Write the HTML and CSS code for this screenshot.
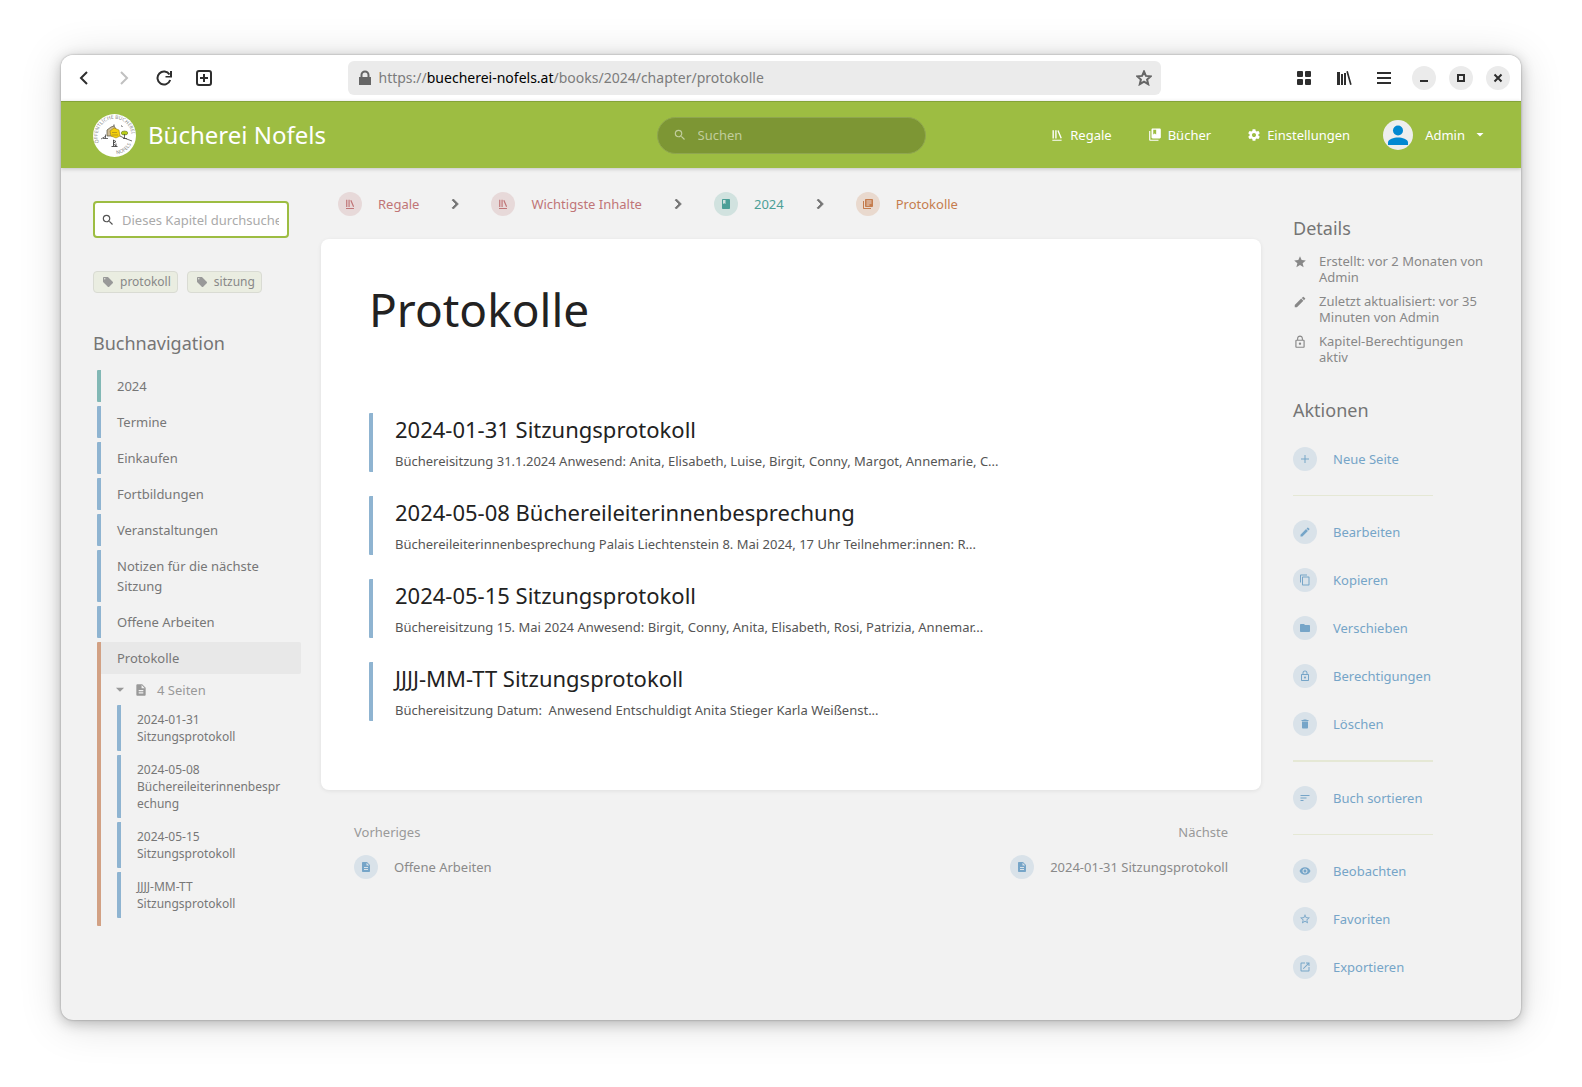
FILE: index.html
```html
<!DOCTYPE html>
<html lang="de">
<head>
<meta charset="utf-8">
<meta name="viewport" content="width=device-width, initial-scale=1">
<title>Protokolle | Bücherei Nofels</title>
<link rel="stylesheet" href="styles.css">
</head>
<body>
<svg class="sprite" aria-hidden="true">
  <symbol id="i-shelf" viewBox="0 0 24 24"><path d="M4 20.058h15.892V22H4z"/><path d="M6.658 3.643V18h-2.38V3.643zM11.326 3.643V18H8.947V3.643zM14.722 3.856l5.613 13.214-2.19.93-5.613-13.214z"/></symbol>
  <symbol id="i-books" viewBox="0 0 24 24"><path d="M20 1H8c-1.100 0-2 .9-2 2v13c0 1.100.9 2 2 2h12c1.100 0 2-.9 2-2V3c0-1.100-.9-2-2-2zM9 3h5v8l-2.500-1.500L9 11z"/><path d="M4 5H2v15c0 1.100.9 2 2 2h14v-2H4z"/></symbol>
  <symbol id="i-book" viewBox="0 0 24 24"><path d="M18 2H6c-1.100 0-2 .9-2 2v16c0 1.100.9 2 2 2h12c1.100 0 2-.9 2-2V4c0-1.100-.9-2-2-2zM6 4h5v8l-2.500-1.500L6 12V4z"/></symbol>
  <symbol id="i-chapter" viewBox="0 0 24 24"><path d="M4 6H2v14c0 1.100.9 2 2 2h14v-2H4V6zm16-4H8c-1.100 0-2 .9-2 2v12c0 1.100.9 2 2 2h12c1.100 0 2-.9 2-2V4c0-1.100-.9-2-2-2zm-1 9H9V9h10v2zm-4 4H9v-2h6v2zm4-8H9V5h10v2z"/></symbol>
  <symbol id="i-page" viewBox="0 0 24 24"><path d="M14 2H6c-1.100 0-2 .9-2 2v16c0 1.100.9 2 2 2h12c1.100 0 2-.9 2-2V8l-6-6zm2 16H8v-2h8v2zm0-4H8v-2h8v2zm-3-5V3.500L18.500 9H13z"/></symbol>
  <symbol id="i-search" viewBox="0 0 24 24"><path d="M15.500 14h-.79l-.28-.27A6.471 6.471 0 0 0 16 9.500 6.500 6.500 0 1 0 9.500 16c1.610 0 3.090-.59 4.230-1.570l.27.28v.79l5 4.990L20.490 19l-4.990-5zm-6 0C7.010 14 5 11.990 5 9.500S7.010 5 9.500 5 14 7.010 14 9.500 11.990 14 9.500 14z"/></symbol>
  <symbol id="i-gear" viewBox="0 0 24 24"><path d="M19.430 12.980c.04-.32.07-.64.07-.98s-.03-.66-.07-.98l2.110-1.650c.19-.15.24-.42.12-.64l-2-3.460c-.12-.22-.39-.3-.61-.22l-2.490 1c-.52-.4-1.080-.73-1.690-.98l-.38-2.650A.488.488 0 0 0 14 2h-4c-.25 0-.46.18-.49.42l-.38 2.650c-.61.25-1.170.59-1.690.98l-2.490-1c-.23-.09-.49 0-.61.22l-2 3.460c-.13.22-.07.49.12.64l2.110 1.650c-.04.32-.07.65-.07.98s.03.66.07.98l-2.110 1.650c-.19.15-.24.42-.12.64l2 3.460c.12.22.39.3.61.22l2.490-1c.52.4 1.080.73 1.690.98l.38 2.650c.03.24.24.42.49.42h4c.25 0 .46-.18.49-.42l.38-2.650c.61-.25 1.170-.59 1.690-.98l2.490 1c.23.09.49 0 .61-.22l2-3.460c.12-.22.07-.49-.12-.64l-2.110-1.650zM12 15.500c-1.930 0-3.500-1.570-3.500-3.500s1.570-3.500 3.500-3.500 3.500 1.570 3.500 3.500-1.570 3.500-3.500 3.500z"/></symbol>
  <symbol id="i-caret" viewBox="0 0 24 24"><path d="M5 8l7 7 7-7z"/></symbol>
  <symbol id="i-chevron" viewBox="0 0 24 24"><path d="M10 6L8.590 7.410 13.170 12l-4.580 4.590L10 18l6-6z"/></symbol>
  <symbol id="i-tag" viewBox="0 0 24 24"><path d="M21.410 11.580l-9-9C12.050 2.220 11.550 2 11 2H4c-1.100 0-2 .9-2 2v7c0 .55.22 1.050.59 1.420l9 9c.36.36.86.58 1.410.58s1.050-.22 1.410-.59l7-7c.37-.36.59-.86.59-1.410s-.23-1.060-.59-1.420zM5.500 7C4.670 7 4 6.330 4 5.500S4.670 4 5.500 4 7 4.670 7 5.500 6.330 7 5.500 7z"/></symbol>
  <symbol id="i-star" viewBox="0 0 24 24"><path d="M12 17.270L18.180 21l-1.640-7.030L22 9.240l-7.190-.61L12 2 9.190 8.630 2 9.240l5.460 4.730L5.820 21z"/></symbol>
  <symbol id="i-star-outline" viewBox="0 0 24 24"><path d="M22 9.240l-7.190-.62L12 2 9.190 8.630 2 9.240l5.460 4.730L5.820 21 12 17.270 18.180 21l-1.630-7.030L22 9.240zM12 15.400l-3.760 2.270 1-4.280-3.320-2.880 4.380-.38L12 6.100l1.710 4.040 4.380.38-3.320 2.880 1 4.280L12 15.400z"/></symbol>
  <symbol id="i-edit" viewBox="0 0 24 24"><path d="M3 17.250V21h3.750L17.810 9.940l-3.750-3.750L3 17.250zM20.710 7.040a.996.996 0 0 0 0-1.410l-2.340-2.340a.996.996 0 0 0-1.410 0l-1.830 1.830 3.750 3.750 1.830-1.830z"/></symbol>
  <symbol id="i-lock" viewBox="0 0 24 24"><path d="M12 17c1.100 0 2-.9 2-2s-.9-2-2-2-2 .9-2 2 .9 2 2 2zm6-9h-1V6c0-2.760-2.240-5-5-5S7 3.240 7 6v2H6c-1.100 0-2 .9-2 2v10c0 1.100.9 2 2 2h12c1.100 0 2-.9 2-2V10c0-1.100-.9-2-2-2zM8.900 6c0-1.710 1.390-3.100 3.100-3.100s3.100 1.390 3.100 3.100v2H8.900V6zM18 20H6V10h12v10z"/></symbol>
  <symbol id="i-add" viewBox="0 0 24 24"><path d="M20 13h-7v7h-2v-7H4v-2h7V4h2v7h7z"/></symbol>
  <symbol id="i-copy" viewBox="0 0 24 24"><path d="M16 1H4c-1.100 0-2 .9-2 2v14h2V3h12V1zm3 4H8c-1.100 0-2 .9-2 2v14c0 1.100.9 2 2 2h11c1.100 0 2-.9 2-2V7c0-1.100-.9-2-2-2zm0 16H8V7h11v14z"/></symbol>
  <symbol id="i-folder" viewBox="0 0 24 24"><path d="M10 4H4c-1.100 0-1.990.9-1.990 2L2 18c0 1.100.9 2 2 2h16c1.100 0 2-.9 2-2V8c0-1.100-.9-2-2-2h-8l-2-2z"/></symbol>
  <symbol id="i-delete" viewBox="0 0 24 24"><path d="M6 19c0 1.100.9 2 2 2h8c1.100 0 2-.9 2-2V7H6v12zM19 4h-3.500l-1-1h-5l-1 1H5v2h14V4z"/></symbol>
  <symbol id="i-sort" viewBox="0 0 24 24"><path d="M3 18h6v-2H3v2zM3 6v2h18V6H3zm0 7h12v-2H3v2z"/></symbol>
  <symbol id="i-eye" viewBox="0 0 24 24"><path d="M12 4.500C7 4.500 2.730 7.610 1 12c1.730 4.390 6 7.500 11 7.500s9.270-3.110 11-7.500c-1.730-4.390-6-7.500-11-7.500zM12 17c-2.760 0-5-2.240-5-5s2.240-5 5-5 5 2.240 5 5-2.240 5-5 5zm0-8c-1.660 0-3 1.340-3 3s1.340 3 3 3 3-1.340 3-3-1.340-3-3-3z"/></symbol>
  <symbol id="i-export" viewBox="0 0 24 24"><path d="M19 19H5V5h7V3H5a2 2 0 0 0-2 2v14a2 2 0 0 0 2 2h14c1.100 0 2-.9 2-2v-7h-2v7zM14 3v2h3.590l-9.830 9.830 1.410 1.410L19 6.410V10h2V3h-7z"/></symbol>
</svg>

<div class="window">
  <div class="toolbar">
    <div class="tools">
      <button class="tool" aria-label="Zurück"><svg viewBox="0 0 16 16"><path d="M11 2L5 8l6 6" class="line"/></svg></button>
      <button class="tool tool-off" aria-label="Vor"><svg viewBox="0 0 16 16"><path d="M5 2l6 6-6 6" class="line"/></svg></button>
      <button class="tool" aria-label="Neu laden"><svg viewBox="0 0 16 16"><path d="M13.500 4.500A6.500 6.500 0 1 0 14.200 10" class="line"/><path d="M16 1v6.500H9.500V6H14V1z"/></svg></button>
      <button class="tool" aria-label="Neuer Tab"><svg viewBox="0 0 16 16"><rect x="1" y="1" width="14" height="14" rx="2" class="line"/><path d="M8 4v8M4 8h8" class="line"/></svg></button>
    </div>
    <div class="address">
      <svg class="address-icon" viewBox="0 0 16 16"><path d="M2 7h1.500V5a4.500 4.500 0 0 1 9 0v2H14v8H2zM5.500 7h5V5a2.500 2.500 0 0 0-5 0z"/></svg>
      <span class="url">https://<b>buecherei-nofels.at</b>/books/2024/chapter/protokolle</span>
      <button class="tool tool-star" aria-label="Lesezeichen"><svg viewBox="0 0 16 16"><path d="M8 1.500l1.900 4.400 4.800.4-3.600 3.200 1.100 4.700L8 11.700l-4.200 2.500 1.100-4.700L1.300 6.300l4.800-.4z" class="line"/></svg></button>
    </div>
    <div class="tools">
      <button class="tool" aria-label="Übersicht"><svg viewBox="0 0 16 16"><rect x="1" y="1" width="6" height="6" rx="1"/><rect x="9" y="1" width="6" height="6" rx="1"/><rect x="1" y="9" width="6" height="6" rx="1"/><rect x="9" y="9" width="6" height="6" rx="1"/></svg></button>
      <button class="tool" aria-label="Bibliothek"><svg viewBox="0 0 16 16"><path d="M1 2h3v13H1zM5 4h2v11H5zM8 3h2v12H8zM10.300 1.500l1.600-.4 3.800 13.400-1.600.4z"/></svg></button>
      <button class="tool" aria-label="Menü"><svg viewBox="0 0 16 16"><path d="M1 2h14v2H1zM1 7h14v2H1zM1 12h14v2H1z"/></svg></button>
      <div class="window-buttons">
        <button class="round" aria-label="Minimieren"><svg viewBox="0 0 16 16"><path d="M4 10h8v2H4z"/></svg></button>
        <button class="round" aria-label="Maximieren"><svg viewBox="0 0 16 16"><path d="M5 5h6v6H5z" class="line"/></svg></button>
        <button class="round" aria-label="Schließen"><svg viewBox="0 0 16 16"><path d="M4.500 4.500l7 7M11.500 4.500l-7 7" class="line"/></svg></button>
      </div>
    </div>
  </div>

  <header class="header">
    <a class="brand" href="#">
      <svg class="logo" viewBox="0 0 43 43" aria-hidden="true">
        <defs>
          <path id="ring-top" d="M6 28.500A17 17 0 1 1 38.300 25"/>
          <path id="ring-low" d="M23.500 40.200A18.800 18.800 0 0 0 39.500 27"/>
        </defs>
        <circle cx="21.500" cy="21.500" r="21.500" fill="#fff"/>
        <text class="ring"><textPath href="#ring-top">ÖFFENTLICHE BÜCHEREI</textPath></text>
        <text class="ring"><textPath href="#ring-low">NOFELS</textPath></text>
        <path d="M14 22v-6l4-3 3-1 2 3v7z" fill="#cdbb94" stroke="#55503f" stroke-width=".7"/>
        <path d="M17 17l4-3 5 2 1 6-4 2-5-2z" fill="#f5cf0b" stroke="#8a7410" stroke-width=".5"/>
        <path d="M19 18.500h5M19 21h6" stroke="#927c25" stroke-width=".6"/>
        <ellipse cx="31.500" cy="19" rx="3.300" ry="2" fill="#b8cd19" stroke="#68772a" stroke-width=".6"/>
        <path d="M31.500 20v5M12.500 20.500v4M8 25l5-3M10 24.500h5M27 22l4 2 8 3M30 24.500h4" fill="none" stroke="#494949" stroke-width=".8"/>
        <path d="M20 26l3 1.500-3 2 3 2.500M20.500 26v6M18.500 32.500h6M23 29.500v3M28.500 11.500l.8 1.500M21 12v-1.500" fill="none" stroke="#444" stroke-width=".9"/>
      </svg>
      <span>Bücherei Nofels</span>
    </a>
    <label class="search">
      <svg class="icon"><use href="#i-search"/></svg>
      <input type="text" placeholder="Suchen" aria-label="Suchen">
    </label>
    <nav class="menu">
      <a href="#"><svg class="icon"><use href="#i-shelf"/></svg>Regale</a>
      <a href="#"><svg class="icon"><use href="#i-books"/></svg>Bücher</a>
      <a href="#"><svg class="icon"><use href="#i-gear"/></svg>Einstellungen</a>
      <button class="user">
        <svg class="avatar" viewBox="0 0 30 30"><circle cx="15" cy="15" r="15" fill="#eee"/><circle cx="15" cy="10.500" r="5" fill="#0288d1"/><path d="M5 25v-2.500c0-3.500 6-5 10-5s10 1.500 10 5V25z" fill="#0288d1"/></svg>
        <span>Admin</span>
        <svg class="icon"><use href="#i-caret"/></svg>
      </button>
    </nav>
  </header>

  <div class="layout">
    <aside class="left">
      <label class="chapter-search">
        <svg class="icon"><use href="#i-search"/></svg>
        <input type="text" placeholder="Dieses Kapitel durchsuchen" aria-label="Dieses Kapitel durchsuchen">
      </label>
      <div class="tags">
        <a class="tag" href="#"><svg class="icon"><use href="#i-tag"/></svg>protokoll</a>
        <a class="tag" href="#"><svg class="icon"><use href="#i-tag"/></svg>sitzung</a>
      </div>
      <h2>Buchnavigation</h2>
      <ul class="nav">
        <li><a class="entry book" href="#">2024</a></li>
        <li><a class="entry" href="#">Termine</a></li>
        <li><a class="entry" href="#">Einkaufen</a></li>
        <li><a class="entry" href="#">Fortbildungen</a></li>
        <li><a class="entry" href="#">Veranstaltungen</a></li>
        <li><a class="entry" href="#">Notizen für die nächste Sitzung</a></li>
        <li><a class="entry" href="#">Offene Arbeiten</a></li>
        <li class="chapter">
          <a class="entry current" href="#">Protokolle</a>
          <button class="toggle"><svg class="icon"><use href="#i-caret"/></svg><svg class="icon"><use href="#i-page"/></svg>4 Seiten</button>
          <ul class="pages">
            <li><a class="entry" href="#">2024-01-31 Sitzungsprotokoll</a></li>
            <li><a class="entry" href="#">2024-05-08 Büchereileiterinnenbesprechung</a></li>
            <li><a class="entry" href="#">2024-05-15 Sitzungsprotokoll</a></li>
            <li><a class="entry" href="#">JJJJ-MM-TT Sitzungsprotokoll</a></li>
          </ul>
        </li>
      </ul>
    </aside>

    <main>
      <nav class="crumbs">
        <a class="crumb shelf" href="#"><span class="disc"><svg class="icon"><use href="#i-shelf"/></svg></span>Regale</a>
        <svg class="step"><use href="#i-chevron"/></svg>
        <a class="crumb shelf" href="#"><span class="disc"><svg class="icon"><use href="#i-shelf"/></svg></span>Wichtigste Inhalte</a>
        <svg class="step"><use href="#i-chevron"/></svg>
        <a class="crumb volume" href="#"><span class="disc"><svg class="icon"><use href="#i-book"/></svg></span>2024</a>
        <svg class="step"><use href="#i-chevron"/></svg>
        <a class="crumb section" href="#"><span class="disc"><svg class="icon"><use href="#i-chapter"/></svg></span>Protokolle</a>
      </nav>
      <section class="card">
        <h1>Protokolle</h1>
        <div class="items">
          <a class="item" href="#"><h3>2024-01-31 Sitzungsprotokoll</h3><p>Büchereisitzung 31.1.2024 Anwesend: Anita, Elisabeth, Luise, Birgit, Conny, Margot, Annemarie, C...</p></a>
          <a class="item" href="#"><h3>2024-05-08 Büchereileiterinnenbesprechung</h3><p>Büchereileiterinnenbesprechung Palais Liechtenstein 8. Mai 2024, 17 Uhr Teilnehmer:innen: R...</p></a>
          <a class="item" href="#"><h3>2024-05-15 Sitzungsprotokoll</h3><p>Büchereisitzung 15. Mai 2024 Anwesend: Birgit, Conny, Anita, Elisabeth, Rosi, Patrizia, Annemar...</p></a>
          <a class="item" href="#"><h3>JJJJ-MM-TT Sitzungsprotokoll</h3><p>Büchereisitzung Datum: &nbsp;Anwesend Entschuldigt Anita Stieger Karla Weißenst...</p></a>
        </div>
      </section>
      <nav class="siblings">
        <div>
          <span>Vorheriges</span>
          <a href="#"><span class="disc blue"><svg class="icon"><use href="#i-page"/></svg></span>Offene Arbeiten</a>
        </div>
        <div class="next">
          <span>Nächste</span>
          <a href="#"><span class="disc blue"><svg class="icon"><use href="#i-page"/></svg></span>2024-01-31 Sitzungsprotokoll</a>
        </div>
      </nav>
    </main>

    <aside class="right">
      <h2>Details</h2>
      <ul class="meta">
        <li><svg class="icon"><use href="#i-star"/></svg><span>Erstellt: vor 2 Monaten von Admin</span></li>
        <li><svg class="icon"><use href="#i-edit"/></svg><span>Zuletzt aktualisiert: vor 35 Minuten von Admin</span></li>
        <li><svg class="icon"><use href="#i-lock"/></svg><span>Kapitel-Berechtigungen aktiv</span></li>
      </ul>
      <h2>Aktionen</h2>
      <div class="actions">
        <a href="#"><span class="disc blue"><svg class="icon"><use href="#i-add"/></svg></span>Neue Seite</a>
        <hr>
        <a href="#"><span class="disc blue"><svg class="icon"><use href="#i-edit"/></svg></span>Bearbeiten</a>
        <a href="#"><span class="disc blue"><svg class="icon"><use href="#i-copy"/></svg></span>Kopieren</a>
        <a href="#"><span class="disc blue"><svg class="icon"><use href="#i-folder"/></svg></span>Verschieben</a>
        <a href="#"><span class="disc blue"><svg class="icon"><use href="#i-lock"/></svg></span>Berechtigungen</a>
        <a href="#"><span class="disc blue"><svg class="icon"><use href="#i-delete"/></svg></span>Löschen</a>
        <hr class="thick">
        <a href="#"><span class="disc blue"><svg class="icon"><use href="#i-sort"/></svg></span>Buch sortieren</a>
        <hr>
        <a href="#"><span class="disc blue"><svg class="icon"><use href="#i-eye"/></svg></span>Beobachten</a>
        <a href="#"><span class="disc blue"><svg class="icon"><use href="#i-star-outline"/></svg></span>Favoriten</a>
        <a href="#"><span class="disc blue"><svg class="icon"><use href="#i-export"/></svg></span>Exportieren</a>
      </div>
    </aside>
  </div>
</div>
</body>
</html>
```

FILE: styles.css
```css
* { box-sizing: border-box; }

body {
  margin: 0;
  padding: 55px 61px 67px;
  background: #fff;
  color: #777;
  font-family: "Noto Sans", "Open Sans", sans-serif;
  font-size: 13px;
  line-height: 20px;
}

a { color: inherit; text-decoration: none; }
button { border: 0; padding: 0; background: none; color: inherit; font: inherit; }
input { font: inherit; border: 0; outline: 0; background: none; padding: 0; min-width: 0; }
ul { list-style: none; margin: 0; padding: 0; }
h1, h2, h3, p { margin: 0; font-weight: 400; }
svg { display: block; flex: none; fill: currentColor; }
.sprite { display: none; }
.line { fill: none; stroke: currentColor; stroke-width: 2; }
.icon { width: 14px; height: 14px; }

.window {
  display: flex;
  flex-direction: column;
  min-height: calc(100vh - 122px);
  border-radius: 12px;
  overflow: hidden;
  background: #f2f2f2;
  box-shadow: 0 0 2px rgba(0, 0, 0, .35), 0 3px 14px rgba(0, 0, 0, .24), 0 4px 44px rgba(0, 0, 0, .14);
}

/* Browser toolbar */
.toolbar {
  display: flex;
  align-items: center;
  justify-content: space-between;
  gap: 16px;
  height: 46px;
  padding: 0 11px 0 15px;
  background: #fff;
  color: #2e2e2e;
}
.tools { display: flex; align-items: center; gap: 24px; }
.tool svg { width: 16px; height: 16px; }
.tool-off { color: #c0c0c0; }
.tool-star { color: #666; }
.window-buttons { display: flex; gap: 13px; margin-left: -4px; }
.round { display: grid; place-items: center; width: 24px; height: 24px; border-radius: 50%; background: #ebebeb; }
.round svg { width: 16px; height: 16px; }
.address {
  display: flex;
  align-items: center;
  gap: 6px;
  flex: 0 1 813px;
  height: 34px;
  padding: 0 9px;
  border-radius: 6px;
  background: #ebebeb;
  min-width: 0;
}
.address-icon { width: 16px; height: 16px; color: #666; }
.url { flex: 1; font-size: 14px; color: #7c7c7c; overflow: hidden; white-space: nowrap; }
.url b { font-weight: 400; color: #000; }

/* Site header */
.header {
  display: grid;
  grid-template-columns: 1fr 269px 1fr;
  align-items: center;
  height: 67px;
  padding: 0 32px;
  border-top: 1px solid #84a338;
  background: #9dbd42;
  color: #fff;
  box-shadow: 0 1px 4px rgba(0, 0, 0, .2);
}
.brand { display: flex; align-items: center; gap: 12px; font-size: 24px; }
.logo { width: 43px; height: 43px; }
.ring { font-size: 5px; fill: #888; }
.search {
  display: flex;
  align-items: center;
  gap: 11px;
  height: 37px;
  padding: 0 15px;
  border: 1px solid #8fa650;
  border-radius: 19px;
  background: #7d9634;
  color: #c1cd9c;
}
.search input { flex: 1; color: #fff; }
.search input::placeholder { color: #c1cd9c; opacity: 1; }
.menu { display: flex; align-items: center; justify-content: flex-end; gap: 36px; }
.menu a { display: flex; align-items: center; gap: 6px; }
.user { display: flex; align-items: center; gap: 12px; margin-left: -3px; padding-right: 3px; }
.user .icon { width: 12px; height: 12px; margin-left: -3px; }
.avatar { width: 30px; height: 30px; }

/* Three columns */
.layout {
  display: grid;
  grid-template-columns: minmax(0, 1fr) minmax(0, 940px) minmax(0, 1fr);
  gap: 32px;
  padding: 0 32px 28px;
}
h2 { font-size: 18px; line-height: 24px; color: #757575; }

.left { padding-top: 33px; }
.chapter-search {
  display: flex;
  align-items: center;
  gap: 7px;
  height: 37px;
  padding: 0 8px 0 6px;
  border: 2px solid #9dbd42;
  border-radius: 4px;
  background: #fff;
  color: #555;
}
.chapter-search input { flex: 1; }
.chapter-search input::placeholder { color: #aaa; opacity: 1; }
.tags { display: flex; gap: 9px; margin: 33px 0 38px; }
.tag {
  display: flex;
  align-items: center;
  gap: 6px;
  height: 22px;
  padding: 0 6px 0 8px;
  border: 1px solid #d9dbd3;
  border-radius: 4px;
  background: #eaede1;
  color: #888;
  font-size: 12px;
}
.tag .icon { width: 12px; height: 12px; color: #999; }

.nav { display: grid; gap: 4px; margin: 15px -12px 0 4px; }
.entry {
  display: block;
  padding: 6px 16px;
  border-left: 4px solid #8fb4d1;
  border-radius: 1px;
  overflow-wrap: anywhere;
}
.book { border-color: #82b8b5; }
.chapter { border-left: 4px solid #d2a184; border-radius: 1px; padding-bottom: 8px; }
.chapter .current { border-left: 0; background: #e8e8e8; border-radius: 0 2px 2px 0; }
.toggle { display: flex; align-items: center; gap: 7px; height: 31px; padding-left: 12px; color: #999; }
.toggle .icon + .icon { margin-right: 2px; }
.pages { display: grid; gap: 4px; margin-left: 16px; font-size: 12px; line-height: 17px; }

/* Breadcrumbs */
.disc {
  display: grid;
  place-items: center;
  flex: none;
  width: 24px;
  height: 24px;
  border-radius: 50%;
}
.disc .icon { width: 12px; height: 12px; }
.blue { background: #d9e2e9; color: #76a5c8; }
.crumbs { display: flex; align-items: center; gap: 26px; height: 71px; padding-left: 17px; }
.crumb { display: flex; align-items: center; gap: 16px; }
.step { width: 20px; height: 20px; color: #757575; stroke: #757575; }
.shelf { color: #c07577; }
.shelf .disc { background: #e7d9d9; }
.volume { color: #4c9f97; }
.volume .disc { background: #d1e2df; }
.section { color: #c57d4e; }
.section .disc { background: #e9d9ce; }

/* Chapter content */
.card {
  padding: 38px 48px 69px;
  border-radius: 8px;
  background: #fff;
  box-shadow: 0 1px 4px rgba(0, 0, 0, .08);
}
h1 { font-size: 46px; line-height: 64px; color: #222; }
.items { display: grid; gap: 24px; margin-top: 72px; }
.item { display: block; padding-left: 22px; border-left: 4px solid #8fb4d1; border-radius: 1px; }
.item h3 { font-size: 22px; line-height: 33px; color: #222; }
.item p { margin-top: 4px; line-height: 22px; color: #555; }

.siblings { display: flex; justify-content: space-between; padding: 32px 33px; color: #999; }
.siblings div { display: grid; gap: 13px; }
.siblings a { display: flex; align-items: center; gap: 16px; color: #8a8a8a; }
.next { text-align: right; }

/* Details and actions */
.right { padding-top: 48px; }
.meta { display: grid; gap: 8px; margin: 13px 0 33px; line-height: 16px; color: #888; }
.meta li { display: flex; gap: 12px; }
.meta .icon { margin-top: 2px; }
.actions { margin-top: 13px; color: #76a5c8; }
.actions a { display: flex; align-items: center; gap: 16px; height: 48px; }
.actions hr { width: 140px; margin: 12px 0; border: 0; border-top: 1px solid #e5e8d5; }
.actions .thick { border-top-width: 2px; }
```
